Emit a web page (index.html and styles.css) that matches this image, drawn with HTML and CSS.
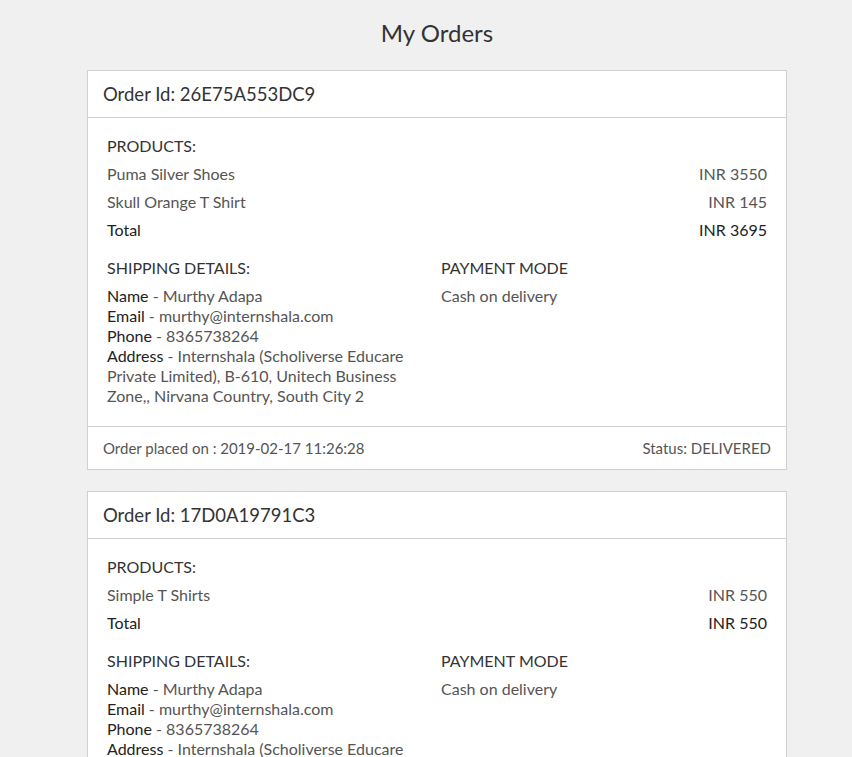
FILE: index.html
```html
<!DOCTYPE html>
<html>
<head>
<meta charset="utf-8">
<title>My Orders</title>
<link rel="stylesheet" href="styles.css">
</head>
<body>
<div class="page">
<h1 class="page-title">My Orders</h1>

<div class="card">
  <div class="card-header">Order Id: 26E75A553DC9</div>
  <div class="card-body">
    <div class="section-label products-label">PRODUCTS:</div>
    <div class="line-row"><span>Puma Silver Shoes</span><span>INR 3550</span></div>
    <div class="line-row"><span>Skull Orange T Shirt</span><span>INR 145</span></div>
    <div class="line-row total"><span>Total</span><span>INR 3695</span></div>
    <div class="details">
      <div class="col">
        <div class="section-label">SHIPPING DETAILS:</div>
        <div class="info">
          <div><b>Name</b> - Murthy Adapa</div>
          <div><b>Email</b> - murthy@internshala.com</div>
          <div><b>Phone</b> - 8365738264</div>
          <div><b>Address</b> - Internshala (Scholiverse Educare Private Limited), B-610, Unitech Business Zone,, Nirvana Country, South City 2</div>
        </div>
      </div>
      <div class="col">
        <div class="section-label">PAYMENT MODE</div>
        <div class="info">Cash on delivery</div>
      </div>
    </div>
  </div>
  <div class="card-footer"><span>Order placed on : 2019-02-17 11:26:28</span><span>Status: DELIVERED</span></div>
</div>

<div class="card">
  <div class="card-header">Order Id: 17D0A19791C3</div>
  <div class="card-body">
    <div class="section-label products-label">PRODUCTS:</div>
    <div class="line-row"><span>Simple T Shirts</span><span>INR 550</span></div>
    <div class="line-row total"><span>Total</span><span>INR 550</span></div>
    <div class="details">
      <div class="col">
        <div class="section-label">SHIPPING DETAILS:</div>
        <div class="info">
          <div><b>Name</b> - Murthy Adapa</div>
          <div><b>Email</b> - murthy@internshala.com</div>
          <div><b>Phone</b> - 8365738264</div>
          <div><b>Address</b> - Internshala (Scholiverse Educare Private Limited), B-610, Unitech Business Zone,, Nirvana Country, South City 2</div>
        </div>
      </div>
      <div class="col">
        <div class="section-label">PAYMENT MODE</div>
        <div class="info">Cash on delivery</div>
      </div>
    </div>
  </div>
  <div class="card-footer"><span>Order placed on : 2019-02-17 11:26:28</span><span>Status: DELIVERED</span></div>
</div>
</div>
</body>
</html>
```
FILE: styles.css
```css
html, body {
  margin: 0;
  padding: 0;
}
body {
  background: #f0f0f0;
  font-family: Lato, "Open Sans", sans-serif;
  color: #555;
  font-size: 16px;
}
.page {
  padding-left: 22px;
}
.page-title {
  margin: 18px 0 22px;
  font-size: 24px;
  line-height: 30px;
  font-weight: 400;
  color: #333;
  text-align: center;
}
.card {
  box-sizing: border-box;
  width: 700px;
  margin: 0 auto 21px;
  background: #fff;
  border: 1px solid #d0d0d0;
}
.card-header {
  height: 46px;
  line-height: 46px;
  padding: 0 15px;
  font-size: 18.5px;
  color: #333;
  border-bottom: 1px solid #d0d0d0;
}
.card-body {
  padding: 14px 19px 20px;
}
.section-label {
  line-height: 28px;
  color: #333;
}
.line-row {
  display: flex;
  justify-content: space-between;
  line-height: 28px;
}
.line-row.total {
  color: #222;
}
.details {
  display: grid;
  grid-template-columns: 1fr 1fr;
  column-gap: 8px;
  margin-top: 10px;
}
.info {
  margin-top: 4px;
  line-height: 20px;
}
.info b {
  font-weight: 400;
  color: #222;
}
.card-footer {
  display: flex;
  justify-content: space-between;
  height: 42px;
  line-height: 42px;
  padding: 0 15px;
  border-top: 1px solid #d0d0d0;
  font-size: 15px;
  color: #555;
}
```
